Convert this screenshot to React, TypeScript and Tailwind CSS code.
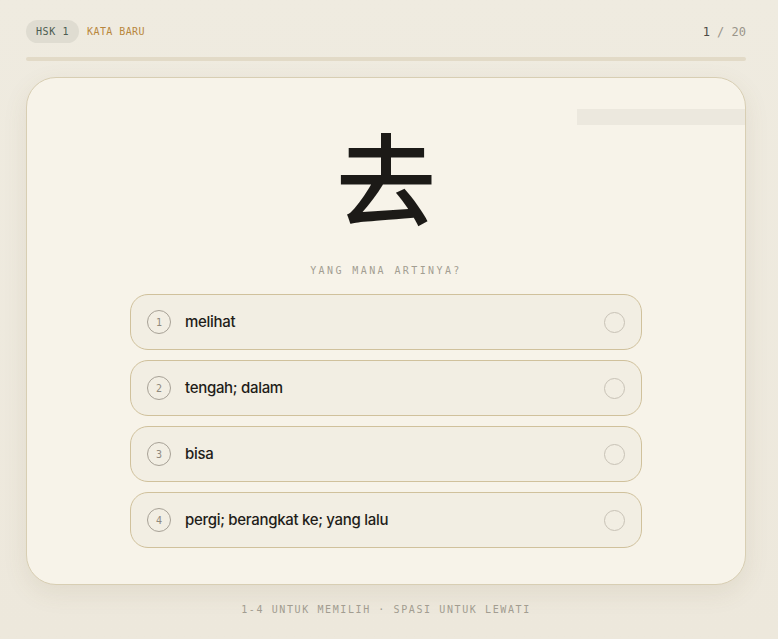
import { useState } from 'react'

const options = ['melihat', 'tengah; dalam', 'bisa', 'pergi; berangkat ke; yang lalu']

const mono = "font-['DejaVu_Sans_Mono','Liberation_Mono',monospace]"

export default function App() {
  const [picked, setPicked] = useState<number | null>(null)

  return (
    <div className="min-h-[639px] bg-gradient-to-b from-[#efebe0] to-[#ede8dc] pl-[26px] pt-[20px] font-['Inter','Noto_Sans',sans-serif]">
      <div className="w-[720px]">
        {/* Header */}
        <div className="flex h-[23px] items-center justify-between">
          <div className="flex items-center gap-2">
            <span className={`${mono} flex h-[23px] items-center rounded-full bg-[#dfdcd1] px-[10px] text-[10px] tracking-[0.06em] text-[#4b5b50]`}>
              HSK 1
            </span>
            <span className={`${mono} text-[10px] tracking-[0.04em] text-[#b8873c]`}>KATA BARU</span>
          </div>
          <div className={`${mono} text-[12px] text-[#9a958a]`}>
            <span className="text-[#4e4b45]">1</span> / 20
          </div>
        </div>

        {/* Progress */}
        <div className="mt-[14px] h-[4px] w-full rounded-full bg-[#e2dac7]">
          <div className="h-full w-0 rounded-full bg-[#b8873c]" />
        </div>

        {/* Card */}
        <div className="relative mt-[16px] h-[508px] rounded-[30px] border border-[#d8ceb3] bg-[#f7f3e9] shadow-[0_8px_24px_rgba(120,100,60,0.10)]">
          <div className="absolute right-0 top-[31px] h-[16px] w-[168px] bg-[#ece8de]" />

          <div className="flex flex-col items-center pt-[35px]">
            <div className="font-['Noto_Sans_CJK_SC','Noto_Sans_CJK_JP',sans-serif] text-[100px] font-medium leading-[124px] text-[#1c1a17]">
              去
            </div>
            <div className={`${mono} mt-[26px] text-[10px] tracking-[0.24em] text-[#a39e92]`}>YANG MANA ARTINYA?</div>

            <div className="mt-[16px] flex w-[512px] flex-col gap-[10px]">
              {options.map((o, i) => (
                <button
                  key={o}
                  onClick={() => setPicked(i)}
                  className={`flex h-[56px] items-center rounded-[18px] border border-[#d0c19c] pl-[16px] pr-[16px] text-left ${
                    picked === i ? 'bg-[#ebe4d2]' : 'bg-[#f2eee3]'
                  }`}
                >
                  <span className={`${mono} flex h-[24px] w-[24px] items-center justify-center rounded-full border border-[#a7a196] text-[10px] text-[#8f897d]`}>
                    {i + 1}
                  </span>
                  <span className="ml-[14px] flex-1 text-[15px] font-[450] tracking-[-0.02em] text-[#1f1d19]">{o}</span>
                  <span className="h-[21px] w-[21px] rounded-full border border-[#c8c2b6]" />
                </button>
              ))}
            </div>
          </div>
        </div>

        <div className={`${mono} mt-[17px] text-center text-[10px] tracking-[0.16em] text-[#a39e92]`}>
          1-4 UNTUK MEMILIH · SPASI UNTUK LEWATI
        </div>
      </div>
    </div>
  )
}
